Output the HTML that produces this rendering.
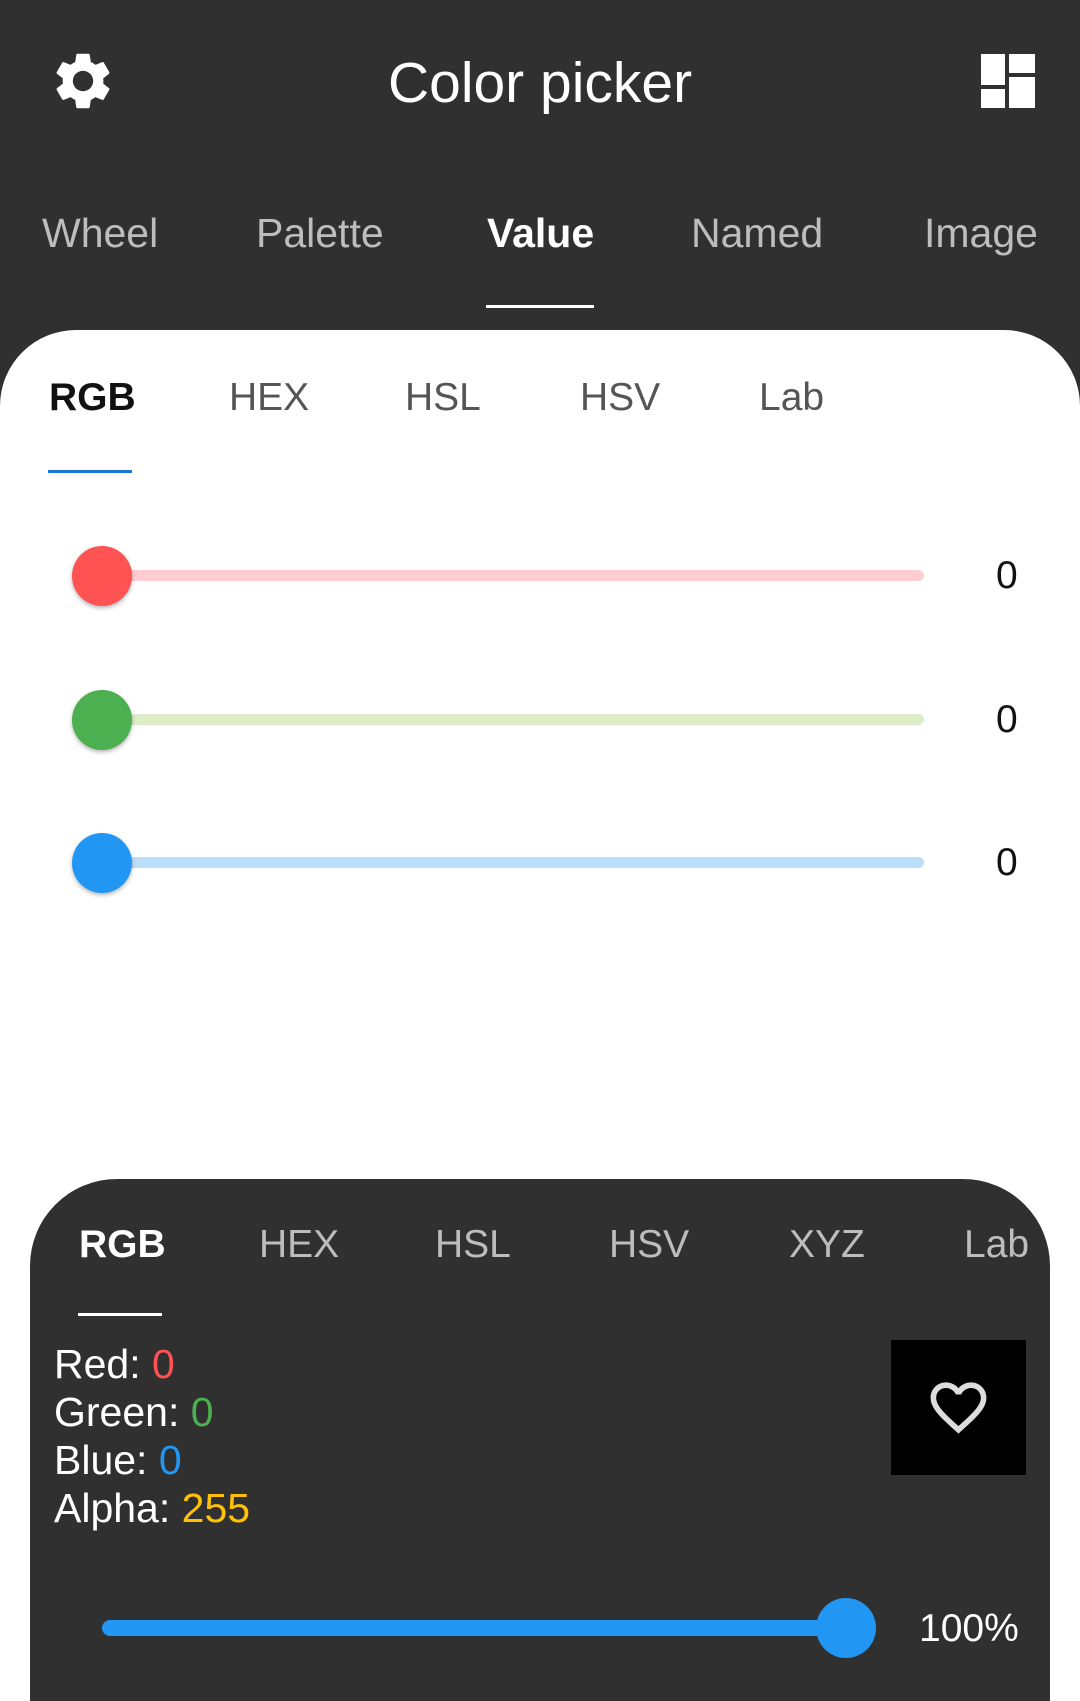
<!DOCTYPE html>
<html><head><meta charset="utf-8"><style>
*{margin:0;padding:0;box-sizing:border-box}
html,body{width:1080px;height:1701px;overflow:hidden}
body{background:#303030;font-family:"Liberation Sans",Roboto,sans-serif;position:relative}
.a{position:absolute;white-space:nowrap}
.t{font-size:41px;color:#bdbdbd;top:210px}
.s{font-size:39px;color:#555;top:376px}
.b{font-size:39px;color:#bdbdbd;top:44px;font-weight:500}
.track{position:absolute;left:102px;width:822px;height:11px;border-radius:6px}
.thumb{position:absolute;left:72px;width:60px;height:60px;border-radius:50%;box-shadow:0 2px 4px rgba(0,0,0,.3)}
.v{font-size:39px;color:#111;left:996px}
.l{font-size:41px;color:#fff;left:54px}
</style></head><body>
<svg class="a" style="left:49px;top:47px" width="68" height="68" viewBox="0 0 24 24"><path fill="#fff" d="M19.14 12.94c.04-.3.06-.61.06-.94 0-.32-.02-.64-.07-.94l2.03-1.58a.49.49 0 0 0 .12-.61l-1.92-3.32a.49.49 0 0 0-.59-.22l-2.39.96c-.5-.38-1.03-.7-1.62-.94l-.36-2.54a.48.48 0 0 0-.48-.41h-3.84c-.24 0-.43.17-.47.41l-.36 2.54c-.59.24-1.13.57-1.62.94l-2.39-.96a.48.48 0 0 0-.59.22L2.74 8.87c-.12.21-.08.47.12.61l2.03 1.58c-.05.3-.09.63-.09.94s.2.64.07.94l-2.03 1.58a.49.49 0 0 0-.12.61l1.92 3.32c.12.22.37.29.59.22l2.39-.96c.5.38 1.03.7 1.62.94l.36 2.54c.05.24.24.41.48.41h3.84c.24 0 .44-.17.47-.41l.36-2.54c.59-.24 1.13-.56 1.62-.94l2.39.96c.22.08.47 0 .59-.22l1.92-3.32c.12-.22.07-.47-.12-.61l-2.01-1.58zM12 15.6A3.6 3.6 0 1 1 12 8.4a3.6 3.6 0 0 1 0 7.2z"/></svg>
<div class="a" style="left:0;width:1080px;text-align:center;top:50px;font-size:57px;color:#fff;font-weight:500">Color picker</div>
<div class="a" style="left:981px;top:54px;width:24px;height:31px;background:#fff"></div>
<div class="a" style="left:981px;top:89px;width:24px;height:19px;background:#fff"></div>
<div class="a" style="left:1009px;top:54px;width:26px;height:19px;background:#fff"></div>
<div class="a" style="left:1009px;top:77px;width:26px;height:31px;background:#fff"></div>
<div class="a t" style="left:42px">Wheel</div>
<div class="a t" style="left:256px">Palette</div>
<div class="a t" style="left:487px;color:#fff;font-weight:bold">Value</div>
<div class="a t" style="left:691px">Named</div>
<div class="a t" style="left:924px">Image</div>
<div class="a" style="left:486px;top:305px;width:108px;height:3px;background:#fff"></div>
<div class="a" style="left:0;top:330px;width:1080px;height:1371px;background:#fff;border-radius:76px 76px 0 0"></div>
<div class="a s" style="left:49px;color:#111;font-weight:bold">RGB</div>
<div class="a s" style="left:229px">HEX</div>
<div class="a s" style="left:405px">HSL</div>
<div class="a s" style="left:580px">HSV</div>
<div class="a s" style="left:759px">Lab</div>
<div class="a" style="left:48px;top:470px;width:84px;height:3px;background:#1976d2"></div>
<div class="track" style="top:570px;background:#ffcdd2"></div><div class="thumb" style="top:546px;background:#ff5252"></div><div class="a v" style="top:554px">0</div>
<div class="track" style="top:714px;background:#dcedc8"></div><div class="thumb" style="top:690px;background:#4caf50"></div><div class="a v" style="top:698px">0</div>
<div class="track" style="top:857px;background:#bbdefb"></div><div class="thumb" style="top:833px;background:#2196f3"></div><div class="a v" style="top:841px">0</div>
<div class="a" style="left:30px;top:1179px;width:1020px;height:522px;background:#303030;border-radius:87px 87px 0 0;overflow:hidden">
<div class="a b" style="left:49px;color:#fff;font-weight:bold">RGB</div>
<div class="a b" style="left:229px">HEX</div>
<div class="a b" style="left:405px">HSL</div>
<div class="a b" style="left:579px">HSV</div>
<div class="a b" style="left:759px">XYZ</div>
<div class="a b" style="left:934px">Lab</div>
</div>
<div class="a" style="left:78px;top:1313px;width:84px;height:3px;background:#fff"></div>
<div class="a l" style="top:1341px">Red: <span style="color:#ff5252">0</span></div>
<div class="a l" style="top:1389px">Green: <span style="color:#4caf50">0</span></div>
<div class="a l" style="top:1437px">Blue: <span style="color:#2196f3">0</span></div>
<div class="a l" style="top:1485px">Alpha: <span style="color:#ffc107">255</span></div>
<div class="a" style="left:891px;top:1340px;width:135px;height:135px;background:#000"></div>
<svg class="a" style="left:925px;top:1374px" width="67" height="67" viewBox="0 0 24 24"><path fill="#ddd" d="M16.5 3c-1.74 0-3.41.81-4.5 2.09C10.91 3.81 9.24 3 7.5 3 4.42 3 2 5.42 2 8.5c0 3.78 3.4 6.86 8.55 11.54L12 21.35l1.45-1.32C18.6 15.36 22 12.28 22 8.5 22 5.42 19.58 3 16.5 3zm-4.4 15.55l-.1.1-.1-.1C7.14 14.24 4 11.39 4 8.5 4 6.5 5.5 5 7.5 5c1.54 0 3.04.99 3.57 2.36h1.87C13.46 5.990 14.96 5 16.5 5c2 0 3.5 1.5 3.5 3.5 0 2.89-3.14 5.74-7.9 10.05z"/></svg>
<div class="a" style="left:102px;top:1620px;width:744px;height:16px;border-radius:8px;background:#2196f3"></div>
<div class="a" style="left:816px;top:1598px;width:60px;height:60px;border-radius:50%;background:#2196f3"></div>
<div class="a" style="left:919px;top:1607px;font-size:39px;color:#fff">100%</div>
</body></html>
